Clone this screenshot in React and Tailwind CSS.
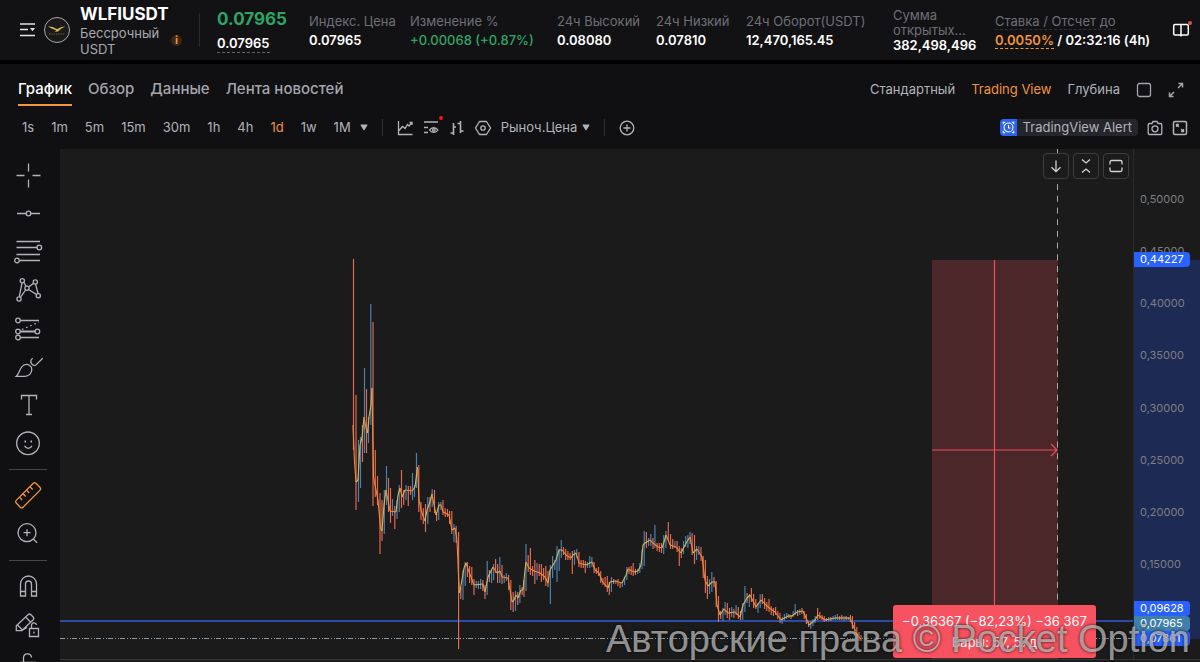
import React, { useState } from 'react';

const stats = [
  { label: 'Индекс. Цена', value: '0.07965', width: 'w-[101px]' },
  { label: 'Изменение %', value: '+0.00068 (+0.87%)', width: 'w-[147px]', up: true },
  { label: '24ч Высокий', value: '0.08080', width: 'w-[99px]' },
  { label: '24ч Низкий', value: '0.07810', width: 'w-[90px]' },
  { label: '24ч Оборот(USDT)', value: '12,470,165.45', width: 'w-[147px]' },
];

const tabs = ['График', 'Обзор', 'Данные', 'Лента новостей'];
const views = ['Стандартный', 'Trading View', 'Глубина'];
const intervals = ['1s', '1m', '5m', '15m', '30m', '1h', '4h', '1d', '1w', '1M'];
const axisPrices = [0.5, 0.45, 0.4, 0.35, 0.3, 0.25, 0.2, 0.15];

// x, high, low, 1 = up / 0 = down
const bars = [
  [353.5, 259, 450, 0], [356, 395, 510, 0], [358.5, 440, 502, 1], [360.5, 437, 488, 1], [362.5, 425, 462, 0],
  [364.5, 368, 453, 1], [366.5, 389, 453, 0], [368.5, 417, 443, 1], [370.8, 304, 425, 1], [373, 322, 506, 0],
  [375.3, 450, 497, 0], [377.5, 476, 505, 0], [380, 493, 554, 0], [382, 500, 541, 0], [384.3, 490, 534, 1],
  [386.5, 466, 505, 1], [388.5, 478, 512, 0], [390.5, 488, 523, 0], [392.5, 499, 516, 1], [394.8, 506, 529, 0],
  [397, 500, 519, 1], [399.2, 485, 512, 1], [401.5, 470, 508, 0], [403.7, 490, 505, 0], [406, 485, 500, 1],
  [408.3, 486, 506, 0], [410.5, 486, 495, 0], [412.5, 473, 500, 1], [414.5, 485, 497, 1], [416.5, 453, 488, 1],
  [418.8, 465, 512, 0], [421, 502, 520, 0], [423.3, 508, 524, 0], [425.5, 504, 532, 0], [427.8, 497, 524, 1],
  [430, 497, 512, 0], [432.2, 489, 507, 1], [434.5, 490, 513, 0], [436.6, 512, 521, 0], [438.7, 502, 520, 1],
  [440.9, 502, 510, 1], [443, 500, 515, 0], [445.2, 508, 517, 0], [447.5, 509, 517, 0], [449.6, 511, 524, 0],
  [451.8, 511, 534, 0], [454, 524, 542, 1], [456.2, 526, 543, 0], [458.6, 532, 649, 0], [460.8, 587, 599, 0],
  [463, 570, 600, 1], [465.2, 562, 586, 1], [467.4, 562, 577, 0], [469.6, 566, 583, 0], [471.8, 567, 585, 0],
  [474, 579, 595, 0], [476.2, 581, 588, 1], [478.4, 581, 589, 1], [480.6, 579, 589, 1], [482.8, 580, 591, 0],
  [485, 585, 599, 0], [487.2, 561, 595, 1], [489.4, 570, 582, 0], [491.6, 570, 583, 1], [493.6, 564, 580, 1],
  [495.6, 559, 573, 0], [497.6, 564, 583, 0], [499.8, 557, 583, 1], [502, 565, 584, 0], [504.2, 575, 583, 1],
  [506.4, 573, 581, 1], [508.6, 575, 590, 0], [510.8, 580, 610, 0], [513.2, 592, 612, 0], [515.5, 591, 611, 1],
  [517.7, 592, 605, 0], [519.9, 585, 603, 1], [522.1, 587, 595, 0], [524, 580, 597, 0], [526, 544, 591, 1],
  [528.2, 555, 572, 0], [530.4, 548, 575, 0], [532.6, 566, 576, 0], [534.8, 560, 584, 0], [537, 563, 580, 1],
  [539.2, 564, 576, 0], [541.4, 564, 582, 0], [543.6, 568, 580, 0], [545.8, 566, 586, 0], [548, 571, 587, 0],
  [550.4, 565, 604, 1], [552.6, 556, 578, 1], [554.8, 560, 570, 1], [557, 546, 582, 1], [559.2, 549, 571, 1],
  [561.3, 540, 558, 1], [563.5, 547, 555, 0], [565.7, 549, 560, 0], [567.9, 551, 560, 0], [570.1, 553, 560, 0],
  [572.3, 551, 574, 0], [574.5, 550, 565, 1], [576.7, 549, 558, 1], [578.9, 552, 567, 0], [581.1, 560, 568, 0],
  [583.3, 560, 568, 0], [585.3, 561, 573, 0], [587.5, 562, 568, 1], [589.7, 556, 568, 1], [591.9, 557, 567, 1],
  [594.1, 562, 573, 0], [596.3, 568, 574, 0], [598.5, 567, 576, 0], [600.7, 571, 583, 0], [602.9, 578, 585, 0],
  [605.1, 577, 587, 0], [607.3, 576, 592, 0], [609.3, 582, 595, 0], [611.4, 577, 592, 1], [613.6, 579, 584, 0],
  [615.8, 580, 584, 1], [618, 579, 586, 0], [620.2, 582, 588, 0], [622.4, 582, 587, 1], [624.6, 577, 585, 1],
  [626.8, 567, 580, 1], [629, 567, 574, 0], [631.2, 566, 575, 0], [633.2, 563, 576, 0], [635.4, 569, 575, 0],
  [637.6, 569, 574, 1], [639.8, 563, 573, 1], [642, 550, 569, 1], [644.2, 531, 566, 1], [646.4, 532, 548, 0],
  [648.6, 538, 546, 1], [650.8, 534, 546, 1], [653, 538, 549, 0], [654.9, 525, 548, 1], [657.1, 543, 551, 0],
  [659.3, 543, 552, 0], [661.5, 543, 553, 0], [663.7, 535, 554, 1], [665.9, 531, 548, 1], [668.3, 522, 540, 0],
  [670.5, 534, 549, 0], [672.7, 539, 549, 0], [674.9, 541, 548, 1], [677.1, 541, 552, 0], [679.3, 546, 566, 0],
  [681.3, 548, 558, 0], [683.5, 541, 554, 1], [685.7, 536, 547, 1], [687.9, 535, 548, 1], [690, 532, 544, 1],
  [692.1, 533, 555, 0], [694.5, 535, 564, 0], [696.6, 546, 560, 1], [698.8, 546, 555, 1], [701, 547, 561, 0],
  [703.2, 556, 578, 0], [705.4, 560, 593, 0], [707.4, 576, 599, 0], [709.5, 579, 594, 1], [711.8, 572, 592, 1],
  [714, 577, 587, 0], [716.2, 581, 607, 0], [718.5, 596, 622, 0], [720.6, 611, 619, 0], [722.9, 608, 621, 1],
  [725.1, 602, 615, 1], [727.3, 603, 618, 0], [729.5, 608, 620, 0], [731.7, 607, 617, 1], [733.9, 609, 618, 0],
  [736.1, 605, 615, 1], [738.3, 607, 619, 0], [740.5, 611, 620, 0], [742.7, 603, 620, 1], [744.9, 586, 612, 1],
  [747.1, 593, 603, 0], [749.3, 594, 607, 1], [751.4, 588, 602, 0], [753.6, 594, 608, 0], [755.8, 599, 609, 0],
  [758, 603, 613, 1], [760.2, 594, 608, 1], [762.4, 594, 604, 0], [764.6, 598, 609, 0], [766.8, 602, 611, 0],
  [769, 599, 612, 0], [771.2, 606, 615, 0], [773.4, 608, 616, 0], [775.6, 607, 615, 0], [777.8, 611, 619, 0],
  [780, 613, 623, 0], [782.2, 617, 624, 1], [784.4, 614, 621, 1], [786.6, 613, 619, 1], [788.8, 614, 618, 0],
  [791, 615, 619, 0], [793.2, 611, 617, 1], [795.2, 604, 615, 1], [797.6, 610, 616, 0], [799.8, 609, 615, 1],
  [802, 608, 614, 0], [804.2, 611, 619, 0], [806.4, 614, 624, 0], [808.6, 621, 627, 0], [810.8, 621, 629, 1],
  [813, 619, 626, 1], [815.2, 616, 623, 1], [817.6, 608, 620, 0], [819.8, 612, 619, 0], [822, 615, 620, 0],
  [824.2, 616, 622, 0], [826.4, 618, 621, 0], [828.6, 617, 621, 1], [830.8, 617, 621, 0], [833, 616, 620, 1],
  [835.2, 615, 620, 1], [837.4, 614, 620, 1], [839.6, 616, 620, 0], [841.8, 615, 620, 0], [844, 616, 621, 1],
  [846.2, 616, 620, 0], [848.4, 617, 620, 1], [850.4, 615, 622, 0], [852.4, 616, 629, 0], [854.6, 622, 634, 0],
  [856.8, 627, 637, 0], [859, 632, 641, 0], [861, 635, 641, 0],
];

const closes = [
  [353, 425], [354.5, 462], [356, 482], [358, 480], [360, 445], [362, 438], [364, 417], [366, 428], [367.5, 433],
  [369, 417], [371, 405], [372, 388], [373.5, 477], [376, 490], [378, 500], [380.5, 528], [382, 531], [384, 505],
  [386, 490], [388, 500], [390, 511], [396, 512], [398, 495], [400, 488], [402, 497], [405, 490], [412, 491],
  [415, 487], [417.5, 467], [419, 500], [421, 510], [425, 521], [427, 510], [430, 502], [432, 494], [436, 515],
  [439, 505], [441, 505], [443, 512], [449, 515], [452, 530], [455, 528], [457, 540], [458.5, 575], [459.5, 593],
  [462, 580], [464, 568], [466, 563], [469, 572], [474, 585], [483, 584], [485, 592], [488, 577], [493, 567],
  [497, 573], [500, 571], [502, 577], [508, 578], [510, 590], [512, 602], [514, 600], [516, 595], [518, 598],
  [521, 590], [523, 590], [525, 570], [526, 562], [529, 568], [534, 571], [540, 573], [545, 577], [548, 583],
  [550, 570], [553, 565], [556, 560], [559, 550], [562, 550], [566, 555], [571, 558], [573, 555], [576, 553],
  [579, 563], [586, 565], [592, 562], [595, 570], [599, 573], [602, 581], [608, 588], [610, 582], [615, 581],
  [622, 583], [626, 575], [628, 569], [634, 572], [638, 571], [641, 565], [643, 545], [645, 543], [650, 540],
  [653, 543], [658, 547], [662, 548], [664, 542], [666, 535], [670, 545], [676, 547], [681, 553], [685, 545],
  [688, 540], [690, 537], [693, 553], [697, 549], [702, 557], [705, 580], [708, 586], [712, 582], [715, 582],
  [717, 605], [720, 615], [724, 609], [728, 613], [735, 612], [740, 617], [743, 605], [747, 598], [750, 595],
  [756, 607], [761, 600], [768, 607], [775, 612], [781, 620], [788, 616], [792, 616], [797, 612], [803, 611],
  [809, 625], [815, 620], [818, 615], [825, 620], [835, 618], [845, 618], [850, 618], [854, 628], [859, 637],
  [861, 639],
];

const Icon = ({ size = 16, box = 16, children, className = '' }) => (
  <svg
    width={size}
    height={size}
    viewBox={`0 0 ${box} ${box}`}
    fill="none"
    stroke="currentColor"
    strokeWidth="1.3"
    className={`shrink-0 ${className}`}
  >
    {children}
  </svg>
);

const Caret = () => (
  <svg width="8" height="7" viewBox="0 0 8 7" fill="currentColor" className="shrink-0">
    <path d="M1.2.5h5.6c.5 0 .8.5.5.9L4.5 6c-.2.4-.8.4-1 0L.7 1.4C.4 1 .7.5 1.2.5z" />
  </svg>
);

const drawingTools = [
  {
    name: 'Перекрестие',
    art: <path d="M4.5 16.5h8M20.5 16.5h8M16.5 4.5v8M16.5 20.5v8" />,
  },
  {
    name: 'Линия тренда',
    art: (
      <>
        <path d="M5 16.5h9M19 16.5h9" />
        <circle cx="16.5" cy="16.5" r="2.3" />
      </>
    ),
  },
  {
    name: 'Фибоначчи',
    art: (
      <>
        <path d="M4.5 6.5H28M4.5 12.5H25M4.5 19.5H28M7.5 25.5H28" />
        <circle cx="27.3" cy="12.5" r="2.3" />
        <circle cx="5" cy="25.5" r="2.3" />
      </>
    ),
  },
  {
    name: 'Паттерны',
    art: (
      <>
        <path d="M10 10 7.3 23.7M12 9.5l2 4M16.8 13.8l4.8-3.4M23.6 11.2l2.4 9.3M16.8 16.8l7.6 4.6M13.6 17l-5 7.2" />
        <circle cx="10.3" cy="7.7" r="2.1" />
        <circle cx="23.3" cy="9" r="2.1" />
        <circle cx="15" cy="15.3" r="2.1" />
        <circle cx="7" cy="26" r="2.1" />
        <circle cx="26.3" cy="22.7" r="2.1" />
      </>
    ),
  },
  {
    name: 'Прогноз',
    art: (
      <>
        <path d="M8.3 9.5H27M8.3 26.5H27" />
        <path d="M8.3 20.5h14.8" strokeWidth="2" />
        <path d="M10 18.5 27 11" strokeDasharray="1.5 3" />
        <circle cx="6" cy="9.5" r="2.3" />
        <circle cx="6" cy="20.5" r="2.3" />
        <circle cx="25.4" cy="20.5" r="2.3" />
        <circle cx="6" cy="26.5" r="2.3" />
      </>
    ),
  },
  {
    name: 'Кисть',
    art: (
      <>
        <path d="M4.3 27.3c3-2.3 3.4-9.3 7.7-11.3 4-1.7 7.8.8 7.8 4.5 0 3.9-3 6.8-6.8 6.8z" />
        <path d="M20.7 9.3c-2.4 1.7-2.4 3.7-1 5.5 1.4 2 3.3 2.2 4.6.8l6.4-6.3" />
      </>
    ),
  },
  {
    name: 'Текст',
    art: <path d="M9.5 12.5v-4h15v4M17 8.5v19M14 27.5h6" />,
  },
  {
    name: 'Эмодзи',
    art: (
      <>
        <circle cx="16" cy="18.3" r="11.3" />
        <path d="M12.5 20.8c1.5 3.3 6 3.3 7.5 0" />
        <path d="M12.5 16.5h1.5M18.5 16.5h1.5" strokeWidth="1.8" />
      </>
    ),
  },
];

const measureTools = [
  {
    name: 'Линейка',
    active: true,
    art: (
      <>
        <path d="M21.3 4.3c.8-.8 1.8-.8 2.6 0l4.2 4.2c.8.8.8 1.8 0 2.6L11 28.2c-.8.8-1.8.8-2.6 0l-4.2-4.2c-.8-.8-.8-1.8 0-2.6z" />
        <path d="m7.5 18.3 2.7 2.7M11 14.8l2.7 2.7M14.5 11.3l2.7 2.7M18 7.8l2.7 2.7" />
      </>
    ),
  },
  {
    name: 'Увеличить',
    art: (
      <>
        <circle cx="15" cy="15.7" r="9" />
        <path d="m21.5 22.2 3.7 3.7M11.5 15.7h7M15 12.2v7" />
      </>
    ),
  },
];

const lockTools = [
  {
    name: 'Магнит',
    art: (
      <>
        <path d="M8.5 26V14a8 8 0 0 1 16 0v12h-5V14a3 3 0 0 0-6 0v12z" />
        <path d="M8.5 21.5h5M19.5 21.5h5" />
      </>
    ),
  },
  {
    name: 'Режим рисования',
    art: (
      <>
        <path d="M15 19.5 9.7 22.7H4.3v-5L16 6.7c1-.9 2-.9 2.900 0l2.300 2.300c.9.900.9 1.900 0 2.800L9.700 22.700M13.500 9l5.300 5.200M5.500 17l4.900 5" />
        <path d="M17.500 20.500h9v8h-9zM19.500 20.500v-3c0-3.300 4.500-3.500 5-.5M22 23.500v2" />
      </>
    ),
  },
  {
    name: 'Заблокировать',
    art: <path d="M8.500 16.500h15v11h-15zM11.500 16.500v-4.500c0-5.300 8-5.300 8-.5" />,
  },
];

const ToolGroup = ({ tools }) =>
  tools.map((tool) => (
    <button
      key={tool.name}
      type="button"
      aria-label={tool.name}
      className={`flex h-[38px] w-8 shrink-0 items-center justify-center ${tool.active ? 'text-[#f0953a]' : 'text-[#b2b3ba]'}`}
    >
      <Icon size={32} box={32}>{tool.art}</Icon>
    </button>
  ));

const Header = () => (
  <header className="flex h-[60px] shrink-0 items-center bg-[#121214] pr-[10px] pl-5">
    <button type="button" aria-label="Меню" className="text-[#e4e4e7]">
      <Icon className="block">
        <path d="M0 2h15M0 7.500h8M0 13.500h15" strokeWidth="1.600" />
        <path d="M10 6h5l-2.500 3.300z" fill="currentColor" stroke="none" />
      </Icon>
    </button>
    <svg width="26" height="26" viewBox="0 0 26 26" className="ml-2 shrink-0">
      <circle cx="13" cy="13" r="12.500" fill="#1a1a1a" stroke="#a9a9a9" />
      <path d="M4 9.500c3-.3 5.500.5 8 2.300 1 .3 2 .2 3-.5 2-1.200 4-1.600 6.500-1.500-2.500.8-4 1.700-5.500 2.900l-2 1.800-3 .3 1-1.500C8.500 12 6.500 11 4 9.500z" fill="#d8b64a" />
      <path d="M5 17h16" stroke="#6a5c30" strokeDasharray="1.500 .8" />
    </svg>
    <div className="ml-[10px] w-[87px] shrink-0">
      <h1 className="text-[17px] leading-[21px] font-bold text-white">WLFIUSDT</h1>
      <p className="text-[13px] leading-[16px] text-[#a9aab0]">Бессрочный USDT</p>
    </div>
    <span className="mt-5 ml-1 flex h-[11px] w-[11px] shrink-0 items-center justify-center rounded-full bg-[#3a2713] text-[11px] leading-[11px] font-bold text-[#f0953a]">i</span>
    <div className="ml-[17px] h-[34px] w-px shrink-0 bg-[#2a2a2e]" />
    <div className="ml-[17px] w-[92px] shrink-0 pt-0.5">
      <div className="text-[17px] leading-[22px] font-bold text-[#2ea566]">0.07965</div>
      <div className="inline-block border-b border-dashed border-[#63646b] text-[13px] leading-[17px] font-semibold text-white">0.07965</div>
    </div>
    {stats.map((s) => (
      <div key={s.label} className={`shrink-0 pt-0.5 ${s.width}`}>
        <div className="text-[13px] leading-[19px] whitespace-nowrap text-[#6e6f76]">{s.label}</div>
        <div className={`text-[13px] leading-[19px] whitespace-nowrap ${s.up ? 'font-medium text-[#2ea566]' : 'font-semibold text-white'}`}>{s.value}</div>
      </div>
    ))}
    <div className="w-[102px] shrink-0">
      <div className="w-[85px] text-[13px] leading-[15px] text-[#6e6f76]">Сумма открытых...</div>
      <div className="text-[13px] leading-[15px] font-semibold text-white">382,498,496</div>
    </div>
    <div className="shrink-0 pt-0.5 whitespace-nowrap">
      <div className="text-[13px] leading-[19px] text-[#6e6f76]">
        <span className="border-b border-dashed border-[#2e2f34]">Ставка / Отсчет до</span>
      </div>
      <div className="text-[13px] leading-[19px] font-semibold text-white">
        <span className="border-b border-dashed border-[#f0953a] text-[#f0953a]">0.0050%</span> / 02:32:16 (4h)
      </div>
    </div>
    <button type="button" aria-label="Обучение" className="relative ml-auto text-white">
      <Icon size={18} box={18} className="block">
        <path d="M9 3.500H3c-.8 0-1.300.5-1.300 1.300v7.900c0 .8.500 1.300 1.300 1.300h12c.8 0 1.300-.5 1.300-1.300V4.800c0-.8-.5-1.300-1.300-1.300H9zm0 0v12" strokeWidth="1.500" />
      </Icon>
      <span className="absolute top-0 -right-0.5 h-1 w-1 rounded-full bg-[#e5484d]" />
    </button>
  </header>
);

const TabRow = ({ tab, setTab, view, setView }) => (
  <nav className="flex h-[42px] shrink-0 items-stretch pr-4 pl-[18px]">
    <div className="flex gap-4">
      {tabs.map((t) => (
        <button
          key={t}
          type="button"
          onClick={() => setTab(t)}
          className={`border-b-2 pt-[10px] text-[15px] font-medium ${t === tab ? 'border-[#f0953a] text-white' : 'border-transparent text-[#a4a5ac]'}`}
        >
          {t}
        </button>
      ))}
    </div>
    <div className="ml-auto flex items-center gap-4 pt-[9px] text-[13px]">
      {views.map((v) => (
        <button key={v} type="button" onClick={() => setView(v)} className={v === view ? 'text-[#f0953a]' : 'text-[#b2b3ba]'}>
          {v}
        </button>
      ))}
      <button type="button" aria-label="Один график" className="text-[#a4a5ac]">
        <Icon className="block"><rect x="1.500" y="1.500" width="13" height="13" rx="2" /></Icon>
      </button>
      <button type="button" aria-label="Развернуть" className="text-[#a4a5ac]">
        <Icon className="block">
          <path d="M10 6l4-4M10.500 1.500h4v4M6 10l-4 4M1.500 10.500v4h4" strokeWidth="1.500" />
        </Icon>
      </button>
    </div>
  </nav>
);

const Toolbar = ({ interval, setInterval }) => (
  <div className="flex h-[43px] shrink-0 items-center pr-3 pl-[22px] text-[13px] text-[#b2b3ba]">
    <div className="flex items-center gap-[17px]">
      {intervals.map((i) => (
        <button key={i} type="button" onClick={() => setInterval(i)} className={i === interval ? 'text-[#f0953a]' : ''}>
          {i}
        </button>
      ))}
    </div>
    <button type="button" aria-label="Другие интервалы" className="ml-[9px]"><Caret /></button>
    <div className="mx-3.5 h-[17px] w-px bg-[#2e2f34]" />
    <div className="flex items-center gap-2.5">
      <button type="button" aria-label="Тип графика">
        <Icon className="block"><path d="M1.500 1v13.500h14M2 10.500l3.500-4 2.500 2 2.500-4 1.500 1.500L15 2.500M12.500 2.500H15V5" /></Icon>
      </button>
      <button type="button" aria-label="Индикаторы" className="relative">
        <Icon className="block">
          <path d="M1 2h14M1 7.500h4M1 12.500h4M6.500 10c2-3 6.500-3 8.500 0-2 3-6.500 3-8.500 0z" />
          <circle cx="10.800" cy="10" r="1.200" />
        </Icon>
        <span className="absolute -top-1 -right-1 h-1 w-1 rounded-full bg-[#f01818]" />
      </button>
      <button type="button" aria-label="Бары">
        <Icon className="block"><path d="M4.500 3v12M1.500 13h3M4.500 7H7M11.500 1v12M8.500 3.500h3M11.500 11h3" strokeWidth="1.600" /></Icon>
      </button>
      <button type="button" aria-label="Настройки">
        <Icon className="block">
          <path d="M4.500 1.500h7l4 6.500-4 6.500h-7L.5 8z" strokeLinejoin="round" />
          <circle cx="8" cy="8" r="2.200" />
        </Icon>
      </button>
      <button type="button" className="flex items-center gap-[5px]">
        Рыноч.Цена <Caret />
      </button>
    </div>
    <div className="mx-3.5 h-[17px] w-px bg-[#2e2f34]" />
    <button type="button" aria-label="Добавить">
      <Icon className="block">
        <circle cx="8" cy="8" r="6.800" />
        <path d="M8 4.500v7M4.500 8h7" />
      </Icon>
    </button>
    <div className="ml-auto flex items-center gap-[9px]">
      <button type="button" className="flex h-[17px] items-center overflow-hidden rounded-sm bg-[#25262b]">
        <span className="flex h-[17px] w-[17px] items-center justify-center bg-[#2d62f0] text-white">
          <Icon size={13}>
            <circle cx="8" cy="8" r="5.500" />
            <path d="M8 5v3.500h2.500M1.500 4V1.500H4M12 1.500h2.500V4M1.500 12v2.500H4M12 14.500h2.500V12" />
          </Icon>
        </span>
        <span className="px-1.5">TradingView Alert</span>
      </button>
      <button type="button" aria-label="Снимок">
        <Icon className="block">
          <path d="M5 3.500 6 1.500h4l1 2h2.500c.8 0 1.300.5 1.300 1.300v8.400c0 .8-.5 1.300-1.300 1.300h-11c-.8 0-1.300-.5-1.300-1.300V4.800c0-.8.500-1.300 1.300-1.300z" />
          <circle cx="8" cy="8.800" r="3" />
        </Icon>
      </button>
      <button type="button" aria-label="Полный экран">
        <Icon className="block">
          <rect x="1.500" y="1.500" width="13" height="13" rx="1.500" strokeWidth="1.500" />
          <path d="M4.500 7V4.500H7M4.500 4.500l2.500 2.500M11.500 9v2.500H9M11.500 11.500 9 9" />
        </Icon>
      </button>
    </div>
  </div>
);

const Chart = () => (
  <svg viewBox="60 149 1073 510" preserveAspectRatio="none" className="absolute inset-0 h-full w-full" fill="none">
    <path d="M60 621H1134" stroke="#2a4ba6" strokeWidth="2" />
    <path d="M60 638.500H1134" stroke="#8b9aa6" strokeDasharray="5 2 1 2 1 1" />
    {bars.map(([x, high, low, up]) => (
      <path key={x} d={`M${x} ${high}V${low}`} stroke={up ? '#4d7fae' : '#e0684f'} strokeWidth="1.200" />
    ))}
    {closes.slice(1).map(([x, y], i) => {
      const [px, py] = closes[i];
      return <path key={x} d={`M${px} ${py}L${x} ${y}`} stroke={y > py ? '#f58a35' : '#c9bb63'} strokeWidth="1.100" />;
    })}
    <path d="M932 260h126v399H932z" fill="#f7525f" fillOpacity=".22" />
    <path d="M994.500 260V605M932 450h125M1051 444l6 6-6 6" stroke="#ee4d5c" strokeWidth="1.200" />
    <path d="M1057.500 149V659" stroke="#a8a8a8" strokeDasharray="6 5.700" />
  </svg>
);

const PriceAxis = () => (
  <div className="relative w-[67px] shrink-0 border-l border-[#2b2b2b] text-[11px] text-[#7d7e83]">
    <div className="absolute inset-x-0 top-[111px] bottom-[20px] bg-[#1d2a54]" />
    {axisPrices.map((p) => (
      <span key={p} className="absolute left-1.5 -translate-y-1/2" style={{ top: `${((0.5 - p) * 1045 + 49.5) / 5.1}%` }}>
        {p.toFixed(5).replace('.', ',')}
      </span>
    ))}
    <span className="absolute top-[103px] left-0 h-[15px] w-[56px] rounded-r-sm bg-[#2962ff] pl-1.5 leading-[15px] text-white">0,44227</span>
    <div className="absolute bottom-[13px] left-0 flex w-[56px] flex-col text-white">
      <span className="h-[15px] rounded-r-sm bg-[#2962ff] pl-1.5 leading-[15px]">0,09628</span>
      <span className="h-[15px] rounded-r-sm bg-[#3f7fab] pl-1.5 leading-[15px]">0,07965</span>
      <span className="h-[15px] rounded-r-sm bg-[#2962ff] pl-1.5 leading-[15px]">0,07861</span>
    </div>
  </div>
);

const paneButtons = [
  { name: 'Вниз', art: <path d="M8 2.500v11M3.500 9.200 8 13.700l4.500-4.500" /> },
  { name: 'Свернуть', art: <path d="M4 1.500 8 5l4-3.500M4 14.500 8 11l4 3.500" /> },
  { name: 'Развернуть панель', art: <path d="M2 6.500V4c0-1 .7-1.500 1.500-1.500h9c.8 0 1.500.5 1.500 1.500v2.500M2 9.500V12c0 1 .7 1.500 1.500 1.500h9c.8 0 1.500-.5 1.500-1.500V9.500" /> },
];

const App = () => {
  const [tab, setTab] = useState('График');
  const [view, setView] = useState('Trading View');
  const [interval, setInterval] = useState('1d');

  return (
    <div className="relative flex h-screen flex-col overflow-hidden bg-black font-['Inter','Noto_Sans',sans-serif]">
      <Header />
      <main className="mt-1 flex min-h-0 flex-1 flex-col bg-[#101012]">
        <TabRow tab={tab} setTab={setTab} view={view} setView={setView} />
        <Toolbar interval={interval} setInterval={setInterval} />
        <div className="flex min-h-0 flex-1">
          <aside className="flex w-[60px] shrink-0 flex-col overflow-hidden pt-[7px] pl-3">
            <ToolGroup tools={drawingTools} />
            <div className="mt-[9px] mb-1.5 -ml-[3px] h-px w-[38px] shrink-0 bg-[#45464b]" />
            <ToolGroup tools={measureTools} />
            <div className="mt-2 mb-1.5 -ml-[3px] h-px w-[38px] shrink-0 bg-[#45464b]" />
            <ToolGroup tools={lockTools} />
          </aside>
          <section className="flex min-w-0 flex-1 flex-col bg-[#1b1b1b]">
            <div className="flex min-h-0 flex-1">
              <div className="relative min-w-0 flex-1">
                <Chart />
                <div className="absolute top-1 right-1 flex gap-1">
                  {paneButtons.map((b) => (
                    <button key={b.name} type="button" aria-label={b.name} className="flex h-[26px] w-[26px] items-center justify-center rounded border border-[#3d3d3f] bg-[#1b1b1b] text-[#d4d4d8]">
                      <Icon>{b.art}</Icon>
                    </button>
                  ))}
                </div>
                <div className="absolute right-[37px] bottom-px flex h-[53px] w-[203px] flex-col items-center justify-center rounded-[3px] bg-[#f7525f] text-[13px] leading-[21px] whitespace-nowrap text-white">
                  <span>−0,36367 (−82,23%) −36 367</span>
                  <span>Бары: 57, 57д</span>
                </div>
              </div>
              <PriceAxis />
            </div>
            <div className="h-[3px] shrink-0 border-t border-[#353535]" />
          </section>
        </div>
      </main>
      <div className="pointer-events-none absolute right-[10px] bottom-0 font-['Liberation_Sans',Arial,sans-serif] text-[38px] leading-[46px] whitespace-nowrap text-white/55 [text-shadow:0_0_3px_rgba(0,0,0,0.9)]">
        Авторские права © Pocket Option
      </div>
    </div>
  );
};

export default App;
